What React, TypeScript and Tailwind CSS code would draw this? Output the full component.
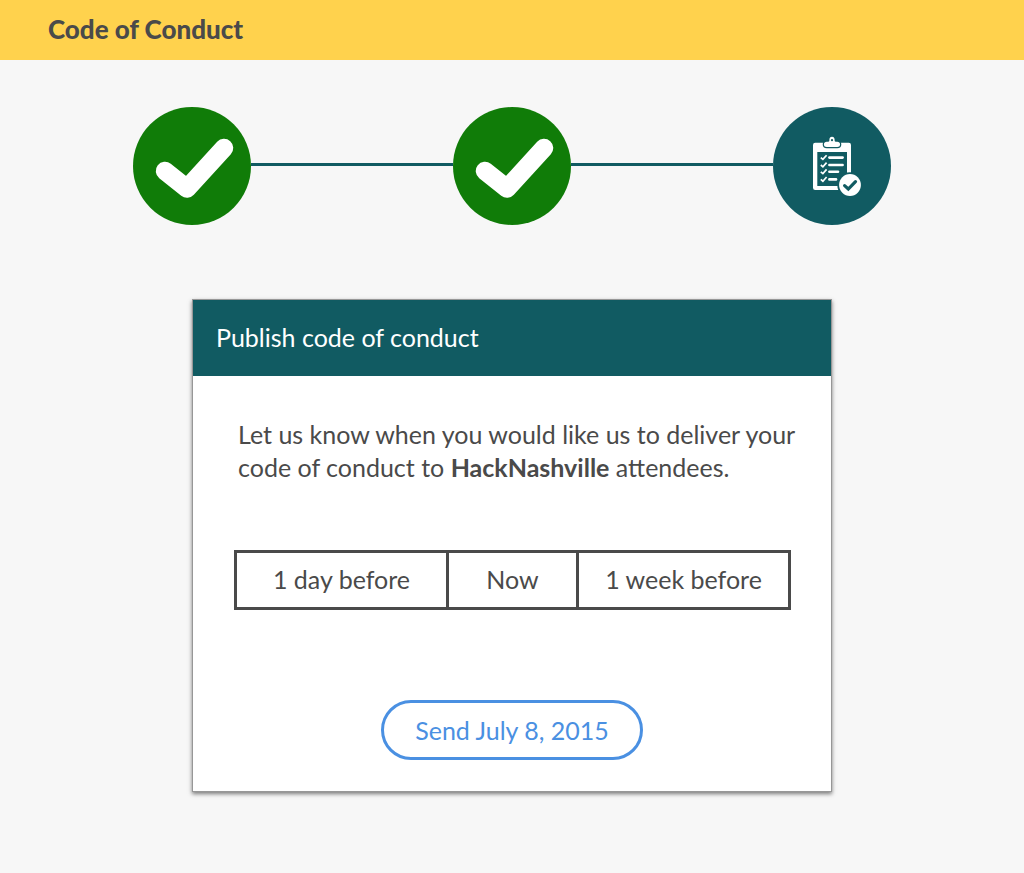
import React from 'react';

function DoneStep() {
  return (
    <li className="size-[118px] shrink-0 rounded-full bg-[#107c08]">
      <svg viewBox="0 0 118 118" className="size-full" role="img" aria-label="Step complete">
        <path
          d="M32 64 L54 81.5 L91 41"
          fill="none"
          stroke="#fff"
          strokeWidth="18.5"
          strokeLinecap="round"
          strokeLinejoin="round"
        />
      </svg>
    </li>
  );
}

const checklist = [
  { y: 50.6, end: 69.6 },
  { y: 58, end: 69.6 },
  { y: 64.8, end: 65 },
  { y: 72.4, end: 63 },
];

function PublishStep() {
  return (
    <li className="size-[118px] shrink-0 rounded-full bg-[#115b62]" aria-current="step">
      <svg viewBox="0 0 118 118" className="size-full" role="img" aria-label="Publish">
        <rect x="40" y="35.7" width="38" height="47.3" rx="2.2" fill="#fff" />
        <rect x="44.3" y="45" width="29.7" height="34" fill="#115b62" />
        <path
          d="M50.9 37.500c0-1.700 1.200-2.700 2.800-2.700h1.600c.9 0 1.100-.8 1.100-2.200 0-1.800 1-2.900 2.600-2.900s2.600 1.100 2.600 2.900c0 1.400.2 2.200 1.100 2.200h1.600c1.600 0 2.800 1 2.800 2.700 0 1.700-1.200 2.500-2.800 2.500h-10.600c-1.600 0-2.800-.8-2.800-2.500z"
          fill="#fff"
          stroke="#115b62"
          strokeWidth="2.400"
          paintOrder="stroke"
        />
        <circle cx="59" cy="33.200" r="1.100" fill="#115b62" />
        <g fill="none" stroke="#fff" strokeLinecap="round">
          {checklist.map(({ y, end }) => (
            <g key={y}>
              <path d={`M47.800 ${y} l2.100 1.800 l3.700 -4.200`} strokeWidth="1.700" strokeLinecap="butt" />
              <path d={`M56.400 ${y} H${end}`} strokeWidth="2.600" />
            </g>
          ))}
        </g>
        <circle cx="77" cy="78" r="12.700" fill="#115b62" />
        <circle cx="77" cy="78" r="10.900" fill="#fff" />
        <path
          d="M71.600 78.600 L75.300 82 L82.500 74.600"
          fill="none"
          stroke="#115b62"
          strokeWidth="3.200"
          strokeLinecap="round"
        />
      </svg>
    </li>
  );
}

function Connector() {
  return <li aria-hidden="true" className="mb-[3px] h-[3px] flex-1 bg-[#115b62]" />;
}

export default function App() {
  return (
    <div className="min-h-screen bg-[#f7f7f7] font-['Lato','Liberation_Sans',sans-serif] text-[25px] leading-[33px] text-[#4a4a4a]">
      <header className="flex h-[60px] items-center bg-[#ffd24d] px-12 pb-[2px]">
        <h1 className="text-[26px] font-black">Code of Conduct</h1>
      </header>

      <main className="px-6 pt-[47px] pb-20">
        <ol className="mx-auto flex max-w-[758px] items-center">
          <DoneStep />
          <Connector />
          <DoneStep />
          <Connector />
          <PublishStep />
        </ol>

        <section className="mx-auto mt-[74px] max-w-[640px] border border-[#979797] bg-white shadow-[0_2px_4px_rgba(0,0,0,0.5)]">
          <h2 className="bg-[#115b62] px-[23px] pt-[21px] pb-[22px] text-white">Publish code of conduct</h2>

          <div className="flex flex-col pt-[42px] pb-[31px]">
            <p className="pr-8 pl-[45px]">
              Let us know when you would like us to deliver your code of conduct to{' '}
              <strong className="font-bold">HackNashville</strong> attendees.
            </p>

            <div
              role="group"
              aria-label="Delivery time"
              className="mt-[66px] mr-[40px] ml-[41px] grid h-[60px] grid-cols-[212fr_130fr_209fr] divide-x-[3px] divide-[#4a4a4a] border-[3px] border-[#4a4a4a]"
            >
              <button type="button" className="pb-[2px]">1 day before</button>
              <button type="button" className="pb-[2px]">Now</button>
              <button type="button" className="pb-[2px]">1 week before</button>
            </div>

            <button
              type="button"
              className="mt-[90px] h-[60px] self-center rounded-full border-[3px] border-[#4a90e2] px-[31px] text-[#4a90e2]"
            >
              Send July 8, 2015
            </button>
          </div>
        </section>
      </main>
    </div>
  );
}
